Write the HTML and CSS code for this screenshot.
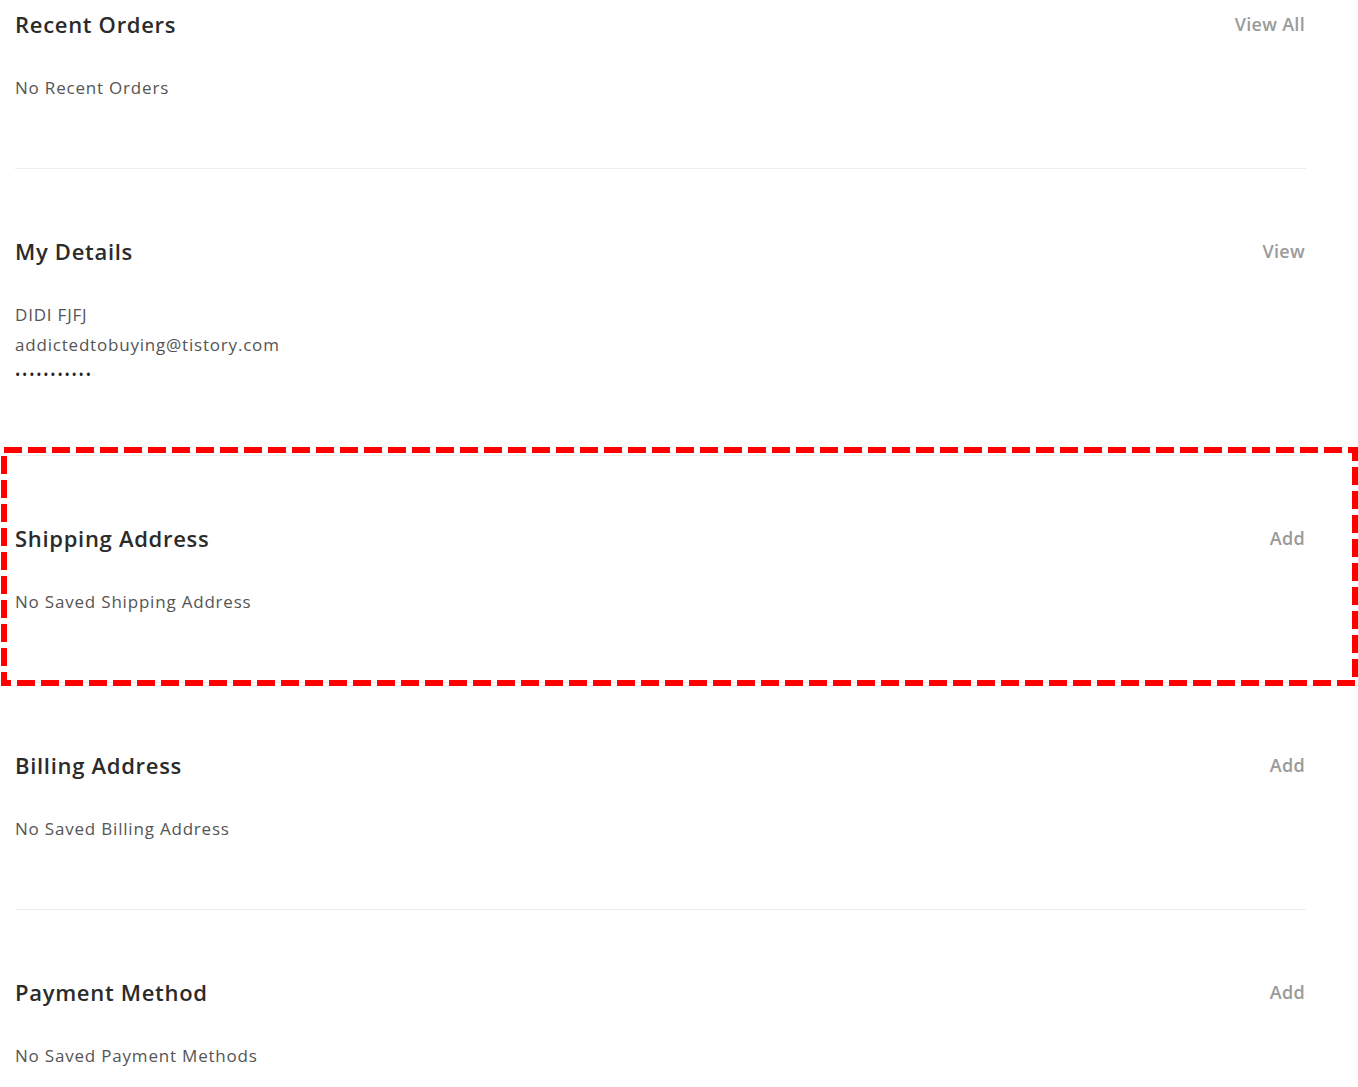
FILE: index.html
```html
<!DOCTYPE html>
<html lang="en">
<head>
    <meta charset="UTF-8">
    <meta name="viewport" content="width=device-width, initial-scale=1.0">
    <title>My Account</title>
    <link rel="stylesheet" href="styles.css">
</head>
<body>
    <div class="account">
        <!-- 최근 주문 -->
        <div class="section first">
            <div class="section-head">
                <h2>Recent Orders</h2>
                <a href="#">View All</a>
            </div>
            <p>No Recent Orders</p>
        </div>

        <!-- 내 정보 -->
        <div class="section">
            <div class="section-head">
                <h2>My Details</h2>
                <a href="#">View</a>
            </div>
            <p>DIDI FJFJ</p>
            <p>addictedtobuying@tistory.com</p>
            <p class="dots">•••••••••••</p>
        </div>

        <!-- 배송지 -->
        <div class="section highlight">
            <div class="section-head">
                <h2>Shipping Address</h2>
                <a href="#">Add</a>
            </div>
            <p>No Saved Shipping Address</p>
            <svg class="mark" width="1357" height="239" viewBox="0 0 1357 239">
                <rect x="3" y="3" width="1351" height="233" fill="none" stroke="#ff0000" stroke-width="6" stroke-dasharray="18 6"/>
            </svg>
        </div>

        <!-- 청구지 -->
        <div class="section">
            <div class="section-head">
                <h2>Billing Address</h2>
                <a href="#">Add</a>
            </div>
            <p>No Saved Billing Address</p>
        </div>

        <!-- 결제 수단 -->
        <div class="section">
            <div class="section-head">
                <h2>Payment Method</h2>
                <a href="#">Add</a>
            </div>
            <p>No Saved Payment Methods</p>
        </div>
    </div>
</body>
</html>
```

FILE: styles.css
```css
body {
    font-family: "Open Sans", Arial, sans-serif;
    background-color: white;
    margin: 0;
    padding: 0;
}

.account {
    margin: 0 52px 0 15px;
}

.section {
    padding: 67px 0 65px;
    border-bottom: 1px solid #ededed;
    position: relative;
}

.section.first {
    padding-top: 9px;
}

.section-head {
    display: flex;
    justify-content: space-between;
    align-items: center;
    margin-bottom: 34px;
}

.section-head h2 {
    margin: 0;
    font-size: 22px;
    font-weight: 600;
    line-height: 30px;
    color: #2b2b2b;
    letter-spacing: 0.7px;
}

.section-head a {
    color: #9a9a9a;
    font-size: 18px;
    font-weight: 600;
    text-decoration: none;
    line-height: 30px;
    letter-spacing: 0.3px;
    padding-right: 1px;
}

.section p {
    margin: 0;
    font-size: 17px;
    line-height: 30px;
    color: #555;
    letter-spacing: 0.8px;
}

.section p.dots {
    font-size: 14px;
    letter-spacing: 1.8px;
    color: #222;
}

.mark {
    position: absolute;
    left: -14px;
    top: -9px;
}
```
